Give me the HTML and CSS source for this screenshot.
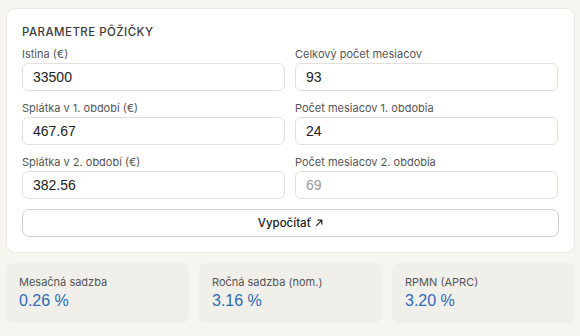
FILE: index.html
```html
<!DOCTYPE html>
<html lang="sk">
<head>
<meta charset="utf-8">
<title>Parametre pôžičky</title>
<link rel="stylesheet" href="styles.css">
</head>
<body>
<main class="page">
  <section class="card">
    <h2 class="title">PARAMETRE PÔŽIČKY</h2>
    <div class="grid">
      <label class="field">
        <span class="label">Istina (€)</span>
        <input class="input" type="text" value="33500">
      </label>
      <label class="field">
        <span class="label">Celkový počet mesiacov</span>
        <input class="input" type="text" value="93">
      </label>
      <label class="field">
        <span class="label">Splátka v 1. období (€)</span>
        <input class="input" type="text" value="467.67">
      </label>
      <label class="field">
        <span class="label">Počet mesiacov 1. obdobia</span>
        <input class="input" type="text" value="24">
      </label>
      <label class="field">
        <span class="label">Splátka v 2. období (€)</span>
        <input class="input" type="text" value="382.56">
      </label>
      <label class="field">
        <span class="label">Počet mesiacov 2. obdobia</span>
        <input class="input input-muted" type="text" placeholder="69" readonly>
      </label>
    </div>
    <button class="button" type="button">Vypočítať
      <svg class="arrow" width="8" height="8" viewBox="0 0 8 8" aria-hidden="true"><path d="M1.2 6.8 L6.6 1.4 M2.4 1.2 H6.8 V5.6" fill="none" stroke="#222" stroke-width="1.2"/></svg>
    </button>
  </section>
  <section class="stats">
    <div class="stat">
      <div class="stat-label">Mesačná sadzba</div>
      <div class="stat-value">0.26 %</div>
    </div>
    <div class="stat">
      <div class="stat-label">Ročná sadzba (nom.)</div>
      <div class="stat-value">3.16 %</div>
    </div>
    <div class="stat">
      <div class="stat-label">RPMN (APRC)</div>
      <div class="stat-value">3.20 %</div>
    </div>
  </section>
</main>
</body>
</html>
```
FILE: styles.css
```css
html, body {
  margin: 0;
  padding: 0;
  background: #f7f5f0;
}
body {
  font-family: Inter, "Liberation Sans", sans-serif;
  color: #222;
}
.page {
  padding: 8px 5px 0 6px;
  display: flex;
  flex-direction: column;
  gap: 10px;
}
.card {
  background: #ffffff;
  border: 1px solid #ece9e3;
  border-radius: 9px;
  padding: 15px 15px 15px 15px;
  display: flex;
  flex-direction: column;
}
.title {
  margin: 0 0 6px 0;
  font-size: 11.5px;
  line-height: 16px;
  font-weight: 500;
  letter-spacing: 0.45px;
  color: #3a3a3a;
}
.grid {
  display: grid;
  grid-template-columns: 1fr 1fr;
  column-gap: 10px;
  row-gap: 9px;
  margin-right: 1px;
}
.field {
  display: flex;
  flex-direction: column;
  gap: 1px;
}
.label {
  font-size: 11px;
  line-height: 16px;
  color: #555;
}
.input {
  box-sizing: border-box;
  height: 28px;
  width: 100%;
  border: 1px solid #e3e0da;
  border-radius: 6px;
  padding: 0 10px;
  font-family: "Liberation Sans", Arial, sans-serif;
  font-size: 14px;
  color: #222;
  background: #fff;
  outline: none;
}
.input-muted::placeholder {
  color: #9a9a9a;
}
.button {
  box-sizing: border-box;
  margin-top: 10px;
  height: 28px;
  border: 1px solid #d2d0cc;
  border-radius: 7px;
  background: #fff;
  font-family: Inter, "Liberation Sans", sans-serif;
  font-size: 11.5px;
  font-weight: 500;
  color: #222;
  display: flex;
  align-items: center;
  justify-content: center;
  gap: 4px;
}
.arrow {
  display: block;
}
.stats {
  display: grid;
  grid-template-columns: 1fr 1fr 1fr;
  gap: 10px;
}
.stat {
  background: #f1efea;
  border-radius: 7px;
  padding: 11px 13px 12px 13px;
}
.stat-label {
  font-size: 11px;
  line-height: 16px;
  color: #555;
}
.stat-value {
  margin-top: 1px;
  font-family: "Liberation Sans", Arial, sans-serif;
  font-size: 16px;
  line-height: 20px;
  color: #2b6cb5;
}
```
